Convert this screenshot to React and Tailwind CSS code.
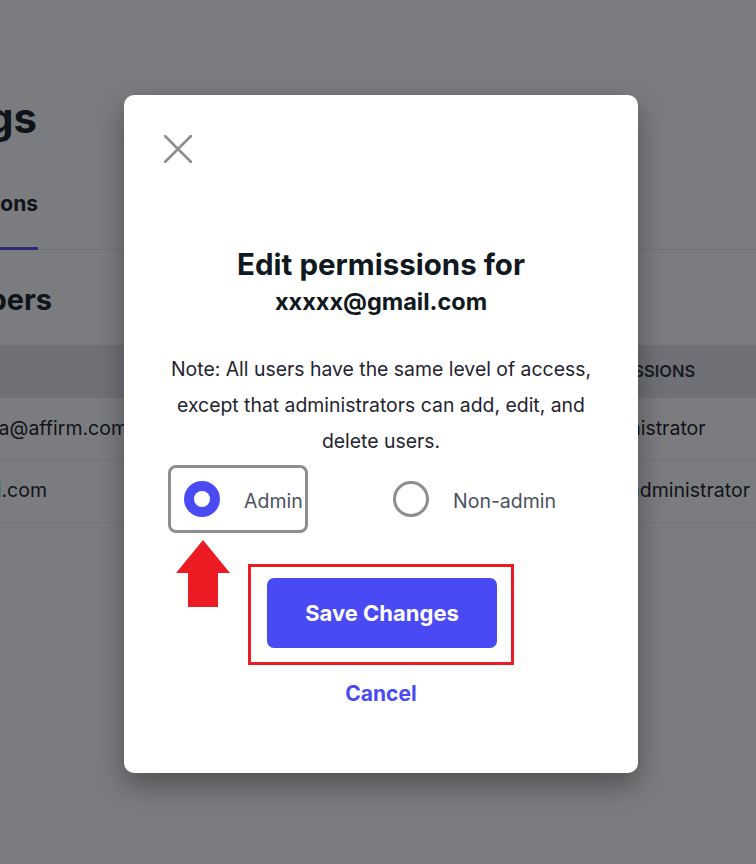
import React from "react";

function CloseIcon() {
  return (
    <svg width="28" height="28" viewBox="0 0 28 28" fill="none">
      <path d="M1 1L27 27M27 1L1 27" stroke="#8e8e8e" strokeWidth="2.6" strokeLinecap="round" />
    </svg>
  );
}

function RedArrow() {
  return (
    <svg width="54" height="67" viewBox="0 0 54 67">
      <polygon points="27,0 54,33 42,33 42,67 12,67 12,33 0,33" fill="#ed1c24" />
    </svg>
  );
}

function ClipEnd({ width, children, className }) {
  return (
    <div className={`flex justify-end overflow-hidden whitespace-nowrap ${className}`} style={{ width }}>
      <span className="shrink-0">{children}</span>
    </div>
  );
}

export default function App() {
  return (
    <div className="relative min-h-[864px] w-full overflow-hidden bg-white font-['Inter',sans-serif] text-[#101820]">
      {/* Background page */}
      <div className="pt-[94px]">
        <ClipEnd width="37px" className="text-[42px] font-bold leading-[48px]">Settings</ClipEnd>
        <div className="mt-[49px] border-b border-[#e5e7eb]">
          <div className="-mb-px w-[38px] border-b-[3px] border-[#4a4af4] pb-[30px]">
            <ClipEnd width="38px" className="text-[21px] font-bold leading-[26px]">Permissions</ClipEnd>
          </div>
        </div>
        <ClipEnd width="52px" className="mt-[32px] text-[29px] font-bold leading-[36px]">Members</ClipEnd>
        <div className="mt-[27px]">
          <div className="flex h-[53px] items-center bg-[#e5e7eb]">
            <div className="w-[582px] shrink-0" />
            <div className="whitespace-nowrap text-[16.5px] font-semibold uppercase text-[#1f2937]">Permissions</div>
          </div>
          <div className="flex h-[62px] items-center border-b border-[#eef0f3] text-[19.5px]">
            <div className="w-[582px] shrink-0">
              <ClipEnd width="128px">firstname.lastnamea@affirm.com</ClipEnd>
            </div>
            <div className="whitespace-nowrap">Administrator</div>
          </div>
          <div className="flex h-[63px] items-center border-b border-[#eef0f3] text-[19.5px]">
            <div className="w-[582px] shrink-0">
              <ClipEnd width="47px">xxxxx@gmail.com</ClipEnd>
            </div>
            <div className="whitespace-nowrap">Non-administrator</div>
          </div>
        </div>
      </div>

      {/* Overlay */}
      <div className="absolute inset-0 bg-[#0e1116]/55" />

      {/* Modal */}
      <div className="absolute inset-0 flex items-start pl-[124px] pt-[95px]">
        <div className="relative flex h-[678px] w-[514px] flex-col rounded-[10px] bg-white shadow-[0_12px_28px_rgba(0,0,0,0.35)]">
          <div className="pl-[40px] pt-[40px]">
            <CloseIcon />
          </div>
          <h2 className="mt-[83px] text-center text-[29.5px] font-bold leading-[36px] text-[#101820]">Edit permissions for</h2>
          <p className="mt-[5px] text-center text-[23.5px] font-bold leading-[30px] text-[#101820]">xxxxx@gmail.com</p>
          <p className="mt-[34px] text-center text-[19.4px] leading-[36px] text-[#1f2430]">
            Note: All users have the same level of access,
            <br />
            except that administrators can add, edit, and
            <br />
            delete users.
          </p>
          <div className="mt-[6px] flex items-center gap-[69px] pl-[44px] text-[19.5px] text-[#4a5260]">
            <div className="flex h-[68px] w-[140px] items-center overflow-hidden rounded-[8px] border-[3px] border-[#8e8e8e] pl-[13px]">
              <div className="flex h-9 w-9 shrink-0 items-center justify-center rounded-full bg-[#4a4af4]">
                <div className="h-4 w-4 rounded-full bg-white" />
              </div>
              <span className="ml-6 whitespace-nowrap pt-[5px]">Admin</span>
            </div>
            <div className="flex h-[68px] items-center border-[3px] border-transparent pl-[13px]">
              <div className="h-9 w-9 rounded-full border-[3px] border-[#8e8e8e]" />
              <span className="ml-6 pt-[5px]">Non-admin</span>
            </div>
          </div>
          <div className="mt-[31px] flex justify-center">
            <div className="border-[3px] border-[#ed1c24] pb-[14px] pl-4 pr-[14px] pt-[11px]">
              <button className="flex h-[70px] w-[230px] items-center justify-center rounded-[7px] bg-[#4a4af4] text-[22px] font-bold text-white">
                Save Changes
              </button>
            </div>
          </div>
          <div className="mt-[15px] text-center text-[21px] font-bold leading-[28px] text-[#4a4af4]">Cancel</div>

          <div className="absolute left-[52px] top-[445px]">
            <RedArrow />
          </div>
        </div>
      </div>
    </div>
  );
}
